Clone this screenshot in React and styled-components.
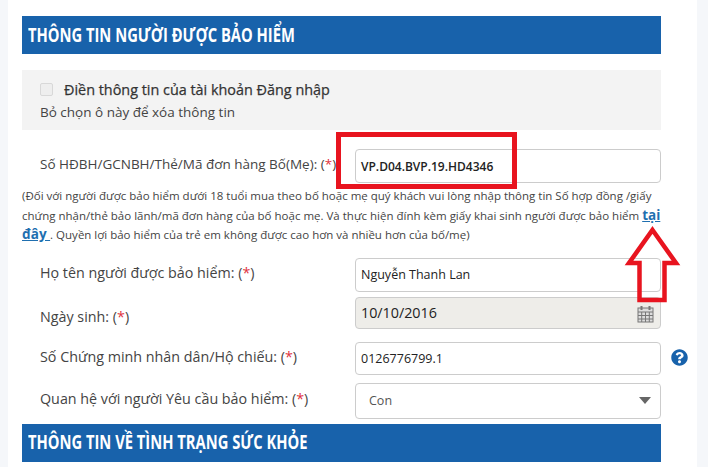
import styled, { createGlobalStyle } from "styled-components";
import { FaQuestionCircle } from "react-icons/fa";

const Global = createGlobalStyle`
  html, body { margin: 0; padding: 0; background: #fff; }
  body { font-family: "Open Sans", "Noto Sans", sans-serif; color: #444; overflow: hidden; }
`;

const Page = styled.div`
  position: relative;
  width: 708px;
  height: 467px;
  overflow: hidden;
  display: grid;
  grid-template-columns: 8px 689px 11px;
`;
const Gutter = styled.div`
  background: #f5f7fa;
`;
const Main = styled.main`
  padding: 16px 36px 0 14px;
`;
const Heading = styled.h2`
  margin: 0;
  height: 38px;
  box-sizing: border-box;
  background: #1862ab;
  color: #fff;
  display: flex;
  align-items: center;
  padding: 0 0 1px 6px;
  font-size: 19px;
  font-weight: 700;
  white-space: nowrap;
  span {
    display: inline-block;
    transform: scaleX(0.775);
    transform-origin: left center;
  }
`;
const AccountPanel = styled.section`
  margin-top: 16px;
  height: 60px;
  background: #f3f3f3;
  padding: 8px 18px 0;
  box-sizing: border-box;
  font-size: 13.5px;
  line-height: 23px;
`;
const CheckRow = styled.label`
  display: flex;
  align-items: center;
  gap: 11px;
  color: #333;
  font-size: 14.4px;
  -webkit-text-stroke: 0.25px #333;
`;
const CheckBox = styled.span`
  width: 11px;
  height: 11px;
  background: #eee;
  border: 1px solid #d8d8d8;
  border-radius: 2px;
`;
const Row = styled.div`
  display: grid;
  grid-template-columns: 333px 306px;
  align-items: center;
  margin-top: ${(p) => p.$top}px;
`;
const Label = styled.label`
  padding: ${(p) => (p.$low ? "8px" : "0")} 0 ${(p) => (p.$low ? "0" : "4px")} 18px;
  font-size: ${(p) => (p.$large ? 14.3 : 13.5)}px;
  white-space: nowrap;
  em { font-style: normal; color: #e0323c; }
`;
const Field = styled.div`
  position: relative;
  box-sizing: border-box;
  height: ${(p) => p.$h}px;
  display: flex;
  align-items: center;
  justify-content: space-between;
  padding: 0 ${(p) => (p.$select ? 9 : 6)}px 0 ${(p) => (p.$select ? 13 : 5)}px;
  border: 1px solid #ccc;
  border-radius: 4px;
  background: ${(p) => (p.$disabled ? "#eeede9" : "#fff")};
  color: ${(p) => (p.$select ? "#555" : "#222")};
  font-size: ${(p) => (p.$disabled ? 14.3 : p.$strong ? 12 : 12.5)}px;
  font-weight: ${(p) => (p.$strong ? 600 : 400)};
  svg.calendar { margin-top: 3px; }
`;
const Note = styled.p`
  margin: 3px 0 0;
  width: 640px;
  font-size: 11.5px;
  line-height: 19.5px;
  color: #444;
  a { color: #1f6fb0; font-weight: 700; font-size: 13.5px; text-decoration: underline; }
`;
const HelpIcon = styled(FaQuestionCircle)`
  position: absolute;
  right: -28px;
  top: 6px;
  width: 17px;
  height: 17px;
  color: #1862ab;
`;
const Caret = styled.span`
  width: 0;
  height: 0;
  border-left: 6px solid transparent;
  border-right: 6px solid transparent;
  border-top: 7px solid #666;
`;
const SecondHeading = styled(Heading)`
  margin-top: 5px;
`;
const RedBox = styled.div`
  position: absolute;
  left: 336px;
  top: 132px;
  width: 181px;
  height: 57px;
  box-sizing: border-box;
  border: 5px solid #e8141f;
`;
const Arrow = styled.svg`
  position: absolute;
  left: 624px;
  top: 224px;
  width: 58px;
  height: 80px;
`;

function CalendarIcon() {
  return (
    <svg className="calendar" width="17" height="18" viewBox="0 0 17 18" fill="none" stroke="#777" strokeWidth="1">
      <rect x="1" y="3" width="15" height="14" fill="#ddd" />
      <path d="M1 7h15M1 10.5h15M1 14h15M4.7 7v10M8.5 7v10M12.3 7v10" />
      <path d="M4.5 1v4M12.5 1v4" strokeWidth="2" />
    </svg>
  );
}

export default function App() {
  return (
    <Page>
      <Global />
      <Gutter />
      <Main>
        <Heading><span>THÔNG TIN NGƯỜI ĐƯỢC BẢO HIỂM</span></Heading>
        <AccountPanel>
          <CheckRow><CheckBox />Điền thông tin của tài khoản Đăng nhập</CheckRow>
          Bỏ chọn ô này để xóa thông tin
        </AccountPanel>
        <Row $top={19}>
          <Label>Số HĐBH/GCNBH/Thẻ/Mã đơn hàng Bố(Mẹ): (<em>*</em>)</Label>
          <Field $h={34} $strong>VP.D04.BVP.19.HD4346</Field>
        </Row>
        <Note>
          (Đối với người được bảo hiểm dưới 18 tuổi mua theo bố hoặc mẹ quý khách vui lòng nhập thông tin Số hợp đồng /giấy
          chứng nhận/thẻ bảo lãnh/mã đơn hàng của bố hoặc mẹ. Và thực hiện đính kèm giấy khai sinh người được bảo hiểm <a href="#">tại đây </a>. Quyền lợi bảo hiểm của trẻ em không được cao hơn và nhiều hơn của bố/mẹ)
        </Note>
        <Row $top={13}>
          <Label $large>Họ tên người được bảo hiểm: (<em>*</em>)</Label>
          <Field $h={34}>Nguyễn Thanh Lan</Field>
        </Row>
        <Row $top={5}>
          <Label $large $low>Ngày sinh: (<em>*</em>)</Label>
          <Field $h={32} $disabled>10/10/2016<CalendarIcon /></Field>
        </Row>
        <Row $top={13}>
          <Label $large>Số Chứng minh nhân dân/Hộ chiếu: (<em>*</em>)</Label>
          <Field $h={33}>0126776799.1<HelpIcon /></Field>
        </Row>
        <Row $top={8}>
          <Label $large>Quan hệ với người Yêu cầu bảo hiểm: (<em>*</em>)</Label>
          <Field $h={36} $select>Con<Caret /></Field>
        </Row>
        <SecondHeading><span>THÔNG TIN VỀ TÌNH TRẠNG SỨC KHỎE</span></SecondHeading>
      </Main>
      <Gutter />
      <RedBox />
      <Arrow viewBox="0 0 58 80">
        <path d="M28.5 6 L52 39 H40.5 V76 H15.5 V39 H5 Z" fill="none" stroke="#e8141f" strokeWidth="4.5" />
      </Arrow>
    </Page>
  );
}
